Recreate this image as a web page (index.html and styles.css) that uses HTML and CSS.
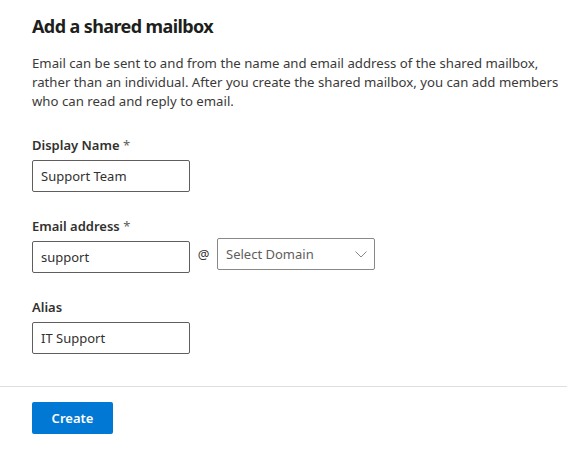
FILE: index.html
```html
<!DOCTYPE html>
<html lang="en">
<head>
  <meta charset="UTF-8" />
  <meta name="viewport" content="width=device-width, initial-scale=1.0"/>
  <title>Add a shared mailbox</title>
  <link rel="stylesheet" href="styles.css">
</head>
<body>
  <div class="panel">
    <div class="panel-content">
      <h1 class="title">Add a shared mailbox</h1>
      <p class="intro">Email can be sent to and from the name and email address of the shared mailbox, rather than an individual. After you create the shared mailbox, you can add members who can read and reply to email.</p>

      <div class="field">
        <label class="field-label" for="display-name">Display Name <span class="required">*</span></label>
        <input class="text-input" id="display-name" type="text" value="Support Team">
      </div>

      <div class="field">
        <label class="field-label" for="email">Email address <span class="required">*</span></label>
        <div class="email-row">
          <input class="text-input" id="email" type="text" value="support">
          <span class="at-sign">@</span>
          <div class="dropdown">
            <span class="dropdown-text">Select Domain</span>
            <svg class="chevron" width="12" height="7" viewBox="0 0 12 7">
              <path d="M0.5 0.5 L6 6 L11.5 0.5" fill="none" stroke="#8a8886" stroke-width="1"/>
            </svg>
          </div>
        </div>
      </div>

      <div class="field">
        <label class="field-label" for="alias">Alias</label>
        <input class="text-input" id="alias" type="text" value="IT Support">
      </div>
    </div>

    <div class="panel-footer">
      <button class="primary-btn">Create</button>
    </div>
  </div>
</body>
</html>
```

FILE: styles.css
```css
body {
  margin: 0;
  background-color: #ffffff;
  font-family: "Noto Sans", "Open Sans", sans-serif;
  color: #323130;
}

.panel-content {
  padding: 12px 8px 32px 32px;
}

.title {
  margin: 0;
  font-size: 18px;
  line-height: 28px;
  font-weight: 700;
  letter-spacing: -0.6px;
  color: #201f1e;
}

.intro {
  margin: 14px 0 0;
  font-size: 13.2px;
  line-height: 19px;
  color: #3b3a39;
}

.field {
  margin-top: 25px;
}

.field-label {
  display: block;
  font-size: 13px;
  line-height: 19px;
  font-weight: 600;
  margin-bottom: 5px;
}

.required {
  color: #605e5c;
  font-weight: 400;
}

.text-input {
  box-sizing: border-box;
  width: 158px;
  height: 32px;
  padding: 0 8px;
  border: 1px solid #605e5c;
  border-radius: 2px;
  font-family: inherit;
  font-size: 13px;
  color: #323130;
  background: #fff;
  outline: none;
}

.email-row {
  display: flex;
  align-items: flex-start;
}

.at-sign {
  width: 27px;
  text-align: center;
  font-size: 13px;
  line-height: 26px;
  color: #323130;
}

.dropdown {
  box-sizing: border-box;
  width: 158px;
  height: 32px;
  margin-top: -3px;
  padding: 0 7px 0 8px;
  border: 1px solid #8a8886;
  border-radius: 2px;
  display: flex;
  align-items: center;
  justify-content: space-between;
}

.dropdown-text {
  font-size: 13px;
  color: #605e5c;
}

.panel-footer {
  border-top: 1px solid #e1dfdd;
  padding: 15px 32px;
}

.primary-btn {
  width: 81px;
  height: 32px;
  border: none;
  border-radius: 2px;
  background-color: #0078d4;
  color: #ffffff;
  font-family: inherit;
  font-size: 13px;
  font-weight: 600;
  cursor: pointer;
}
```
